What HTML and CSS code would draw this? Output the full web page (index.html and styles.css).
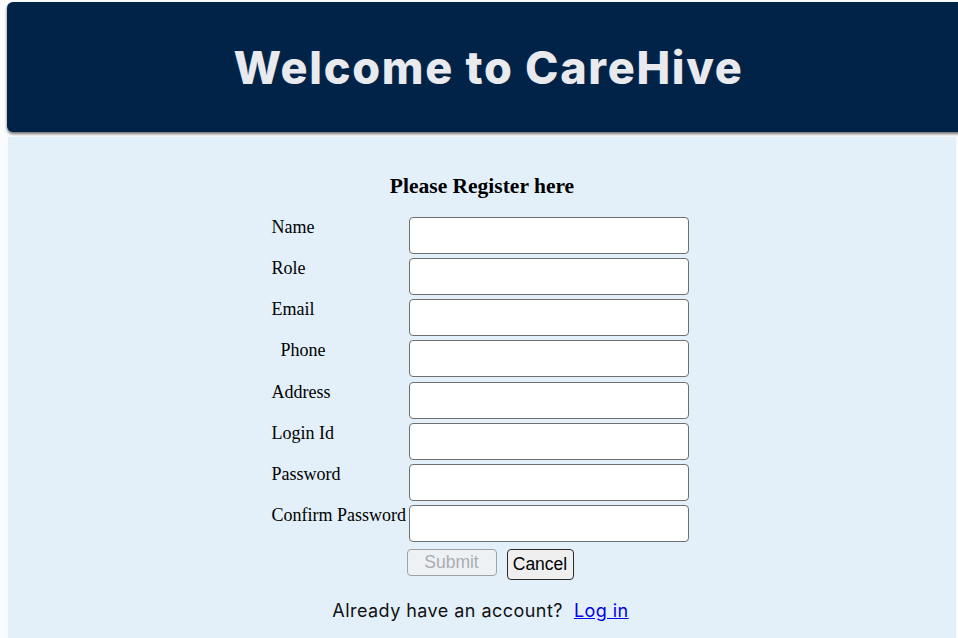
FILE: index.html
```html
<!DOCTYPE html>
<html lang="en">
<head>
<meta charset="utf-8">
<title>CareHive - Register</title>
<link rel="stylesheet" href="styles.css">
</head>
<body>
<header class="header">
  <h1 class="title">Welcome to CareHive</h1>
</header>
<main class="main">
  <h2 class="heading">Please Register here</h2>
  <form class="form">
    <label class="label">Name</label><input class="field" type="text">
    <label class="label">Role</label><input class="field" type="text">
    <label class="label">Email</label><input class="field" type="email">
    <label class="label indent">Phone</label><input class="field" type="tel">
    <label class="label">Address</label><input class="field" type="text">
    <label class="label">Login Id</label><input class="field" type="text">
    <label class="label">Password</label><input class="field" type="password">
    <label class="label">Confirm Password</label><input class="field" type="password">
    <div class="actions">
      <button class="btn submit" type="submit" disabled>Submit</button>
      <button class="btn cancel" type="button">Cancel</button>
    </div>
  </form>
  <p class="login">Already have an account?&nbsp; <a href="#" class="link">Log in</a></p>
</main>
</body>
</html>
```

FILE: styles.css
```css
html, body {
  margin: 0;
  padding: 0;
  height: 100%;
  overflow: hidden;
  background: #fafbfc;
}

body {
  display: flex;
  flex-direction: column;
}

.header {
  margin: 2px -12px 0 7px;
  height: 130px;
  background: #012348;
  border-radius: 6px;
  box-shadow: 0 2px 3px rgba(0, 0, 0, 0.55);
  display: flex;
  align-items: center;
  justify-content: center;
  flex-shrink: 0;
}

.title {
  margin: 0;
  font-family: "Inter", "Open Sans", sans-serif;
  font-weight: 800;
  font-size: 45px;
  color: #e8eaee;
  letter-spacing: 1.7px;
}

.main {
  flex: 1;
  margin: 5px 2px 0 8px;
  background: #e3f0fa;
  display: flex;
  flex-direction: column;
  align-items: center;
  padding-top: 37px;
  font-family: "Liberation Serif", "Times New Roman", serif;
}

.heading {
  margin: 0 0 19px;
  font-size: 21.5px;
  font-weight: 700;
  line-height: 24px;
}

.form {
  display: grid;
  grid-template-columns: 137px 280px;
  grid-auto-rows: 37px;
  row-gap: 4.15px;
  margin-left: -4px;
}

.label {
  font-size: 18px;
  line-height: 20px;
  white-space: nowrap;
}

.label.indent {
  padding-left: 9px;
}

.field {
  box-sizing: border-box;
  height: 37px;
  width: 280px;
  margin: 0;
  border: 1px solid #6f6f6f;
  border-radius: 4px;
  background: #fff;
}

.actions {
  grid-column: 2;
  display: flex;
  align-items: flex-start;
  gap: 10px;
  margin-left: -2px;
  margin-top: 3px;
}

.btn {
  font-family: "Liberation Sans", Arial, sans-serif;
  font-size: 17.5px;
  border-radius: 4px;
  margin: 0;
  box-sizing: border-box;
}

.submit {
  width: 90px;
  height: 27px;
  padding: 0;
  background: #eef1f4;
  color: #a9adb2;
  border: 1px solid #9ea3a8;
  line-height: 25px;
}

.cancel {
  width: 67px;
  height: 31px;
  padding: 0;
  background: #efefef;
  color: #000;
  border: 1px solid #2b2b2b;
}

.login {
  margin: 17px 0 0 -3px;
  font-family: "Inter", "Open Sans", sans-serif;
  font-size: 18px;
  letter-spacing: 0.45px;
  color: #111;
}

.link {
  color: #0000ee;
  text-decoration: underline;
}
```
